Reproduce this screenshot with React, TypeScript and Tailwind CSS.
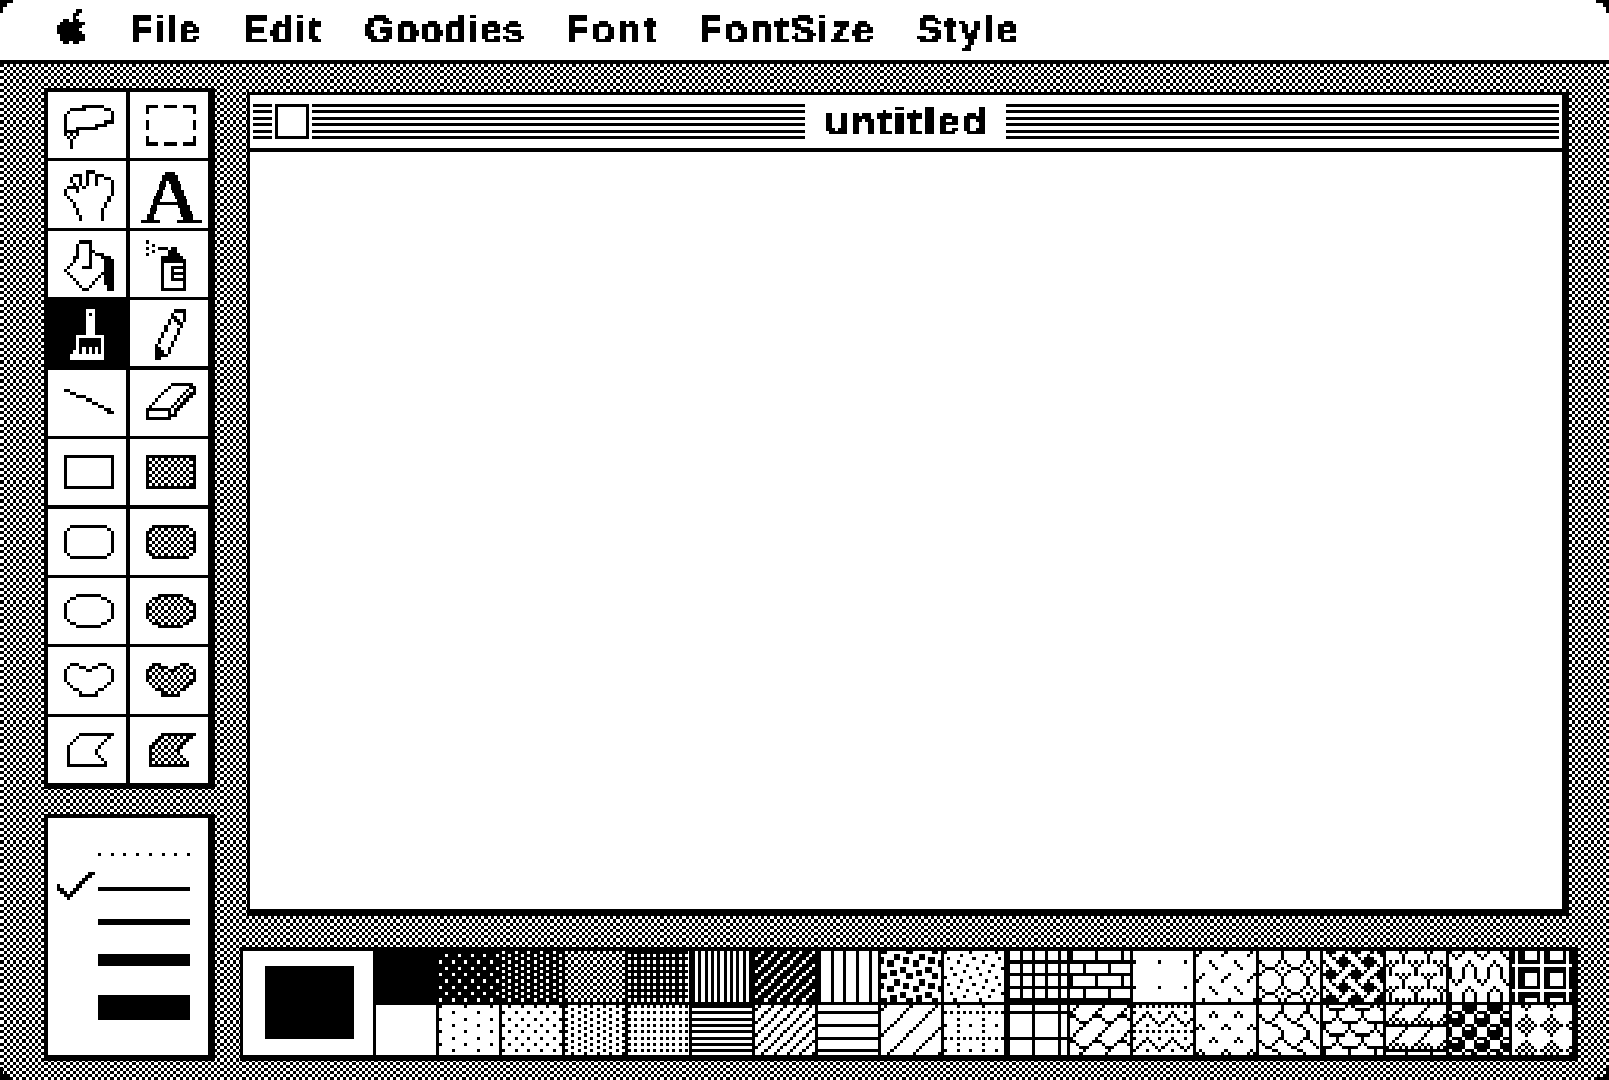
import React from "react";

// classic 8x8 paint patterns, one byte per row
const topPatterns = [
  "FFFFFFFFFFFFFFFF", "77FFDDFF77FFDDFF", "DD77DD77DD77DD77", "AA55AA55AA55AA55", "55FF55FF55FF55FF",
  "AAAAAAAAAAAAAAAA", "EEDDBB77EEDDBB77", "8888888888888888", "B130031BD8C00C8D", "8010022001084004",
  "FF888888FF888888", "FF808080FF080808", "8000000000000000", "8040200002040800", "8244394482010101",
  "F87422478F172271", "55A04040550A0404", "2050888888880502", "BF00BFBFB0B0B0B0",
];
const bottomPatterns = [
  "0000000000000000", "8000080080000800", "8800220088002200", "8822882288228822", "AA00AA00AA00AA00",
  "FF00FF00FF00FF00", "1122448811224488", "FF000000FF000000", "0102040810204080", "AA00800088008000",
  "FF80808080808080", "081C22C180010204", "881422418800AA00", "40A00000040A0000", "038448300C020101",
  "8080413E080814E3", "102054AAFF020408", "77898F8F7798F8F8", "0008142A552A1408",
];

function patternPath(hex: string, gx: number, gy: number, w: number, h: number) {
  let d = "";
  for (let y = 0; y < h; y++) {
    const row = parseInt(hex.substr(((gy + y) % 8) * 2, 2), 16);
    for (let x = 0; x < w; x++) {
      if ((row >> (7 - ((gx + x) % 8))) & 1) d += `M${x} ${y}h1v1h-1z`;
    }
  }
  return d;
}

// turns rows of # into a path; + is the grey fill when filled is on
function bitmapPath(rows: string[], dx = 0, dy = 0, filled = false) {
  let d = "";
  rows.forEach((row, y) => {
    row.split("").forEach((c, x) => {
      const on = c === "#" || (filled && c === "+" && (x + y) % 2 === 1);
      if (on) d += `M${x + dx} ${y + dy}h1v1h-1z`;
    });
  });
  return d;
}

// the desktop grey: one hard band per original screen pixel, xor'd by the blend mode
function bands(angle: string, count: number, scale: number, from: number, start: number) {
  const stops: string[] = [];
  for (let i = from; i < count; i++) {
    const a = Math.max(Math.ceil(i * scale) - start, 0);
    const b = Math.ceil((i + 1) * scale) - start;
    stops.push(`${i % 2 === 0 ? "#000" : "#fff"} ${a}px ${b}px`);
  }
  return `linear-gradient(${angle},${stops.join(",")})`;
}
const desktopGrey = `${bands("90deg", 512, 1609 / 512, 0, 0)},${bands("180deg", 342, 1080 / 342, 20, 64)}`;

const lasso = [
  "......#######...",
  "..#####......##.",
  ".#.............#",
  "#..............#",
  "#..............#",
  "#............###",
  "#.........####..",
  "#...#######.....",
  "#####...........",
  "#.#.#...........",
  ".#.#............",
  "..#.............",
  "..#.............",
  "..#.............",
];
const marquee = [
  "####..####..####",
  "#..............#",
  "#..............#",
  "................",
  "................",
  "#..............#",
  "#..............#",
  "#..............#",
  "................",
  "................",
  "#..............#",
  "#..............#",
  "####..####..####",
];
const hand = [
  ".......###......",
  "...###.#..###...",
  "..#..#.#..#..##.",
  "..#..#.#..#....#",
  "...#.#.#..#....#",
  ".####.#........#",
  "#...#..........#",
  "#..............#",
  ".#............#.",
  "..#...........#.",
  "...#.........#..",
  "...#.........#..",
  "....#.......#...",
  "....#.......#...",
  ".....#......#...",
  ".....#......#...",
];
const bucket = [
  ".....####.......",
  "....#...#.......",
  "....#...#.......",
  "....#...##......",
  "....#...#.###...",
  "...##...#...###.",
  "...#....#....###",
  "..#.....#....###",
  ".#....###....###",
  "#............###",
  ".#..........####",
  "..#........#.###",
  "...#......#..###",
  "....#....#...###",
  ".....#..#.....##",
  "......##......##",
];
const spray = [
  "#............",
  "..#..........",
  "#...###.##...",
  "..#....###...",
  "#......####..",
  ".....#######.",
  ".....########",
  ".....#......#",
  ".....#..#####",
  ".....#..#...#",
  ".....#..#####",
  ".....#..#...#",
  ".....#..#####",
  ".....#......#",
  ".....#......#",
  ".....########",
];
const brush = [
  ".....###...",
  ".....#.#...",
  ".....###...",
  ".....###...",
  ".....###...",
  ".....###...",
  ".....###...",
  ".....###...",
  "..#########",
  "..#.......#",
  "..#.......#",
  "..#.......#",
  "..#.#.#.#.#",
  ".##.#.#.#.#",
  "###########",
  "###########",
];
const pencil = [
  "......####",
  ".....#...#",
  ".....##..#",
  "....#.##.#",
  "....#..##.",
  "...#....#.",
  "...#...#..",
  "..#....#..",
  "..#...#...",
  ".#....#...",
  ".#...#....",
  "#....#....",
  "##..#.....",
  "###.#.....",
  "####......",
  "##........",
];
const line = [
  "##..............",
  "..##............",
  "....###.........",
  ".......##.......",
  ".........##.....",
  "...........##...",
  ".............##.",
  "..............##",
];
const eraser = [
  "........#######.",
  ".......#......##",
  "......#......#.#",
  ".....#......#.##",
  "....#......#.##.",
  "...#......#.##..",
  "..#......#.##...",
  ".#......#.##....",
  "########.##.....",
  "#......#.#......",
  "#......###......",
  "########........",
];
const rect = [
  "################",
  ...Array(9).fill("#++++++++++++++#"),
  "################",
];
const round = [
  "..############..",
  ".#++++++++++++#.",
  ...Array(7).fill("#++++++++++++++#"),
  ".#++++++++++++#.",
  "..############..",
];
const oval = [
  "....########....",
  "..##++++++++##..",
  ".#++++++++++++#.",
  "#++++++++++++++#",
  "#++++++++++++++#",
  "#++++++++++++++#",
  "#++++++++++++++#",
  "#++++++++++++++#",
  ".#++++++++++++#.",
  "..##++++++++##..",
  "....########....",
];
const blob = [
  "..###......###..",
  ".#+++##..##+++#.",
  "#++++++##++++++#",
  "#++++++++++++++#",
  "#++++++++++++++#",
  "#++++++++++++++#",
  ".#++++++++++++#.",
  "..#++++++++++#..",
  "...##++++++##...",
  ".....#++++#.....",
  ".....######.....",
];
const poly = [
  "....###########",
  "...#+++++++++#.",
  "..#+++++++++#..",
  ".#+++++++++#...",
  "#+++++++++#....",
  "#++++++++#.....",
  "#++++++++#.....",
  "#+++++++++#....",
  "#++++++++++#...",
  "#+++++++++++#..",
  "#############..",
];
const check = [
  "..........##",
  ".........##.",
  "........##..",
  ".......##...",
  "#.....##....",
  "##...##.....",
  ".##.##......",
  "..###.......",
  "...#........",
];
const apple = [
  "......##.",
  ".....##..",
  ".....#...",
  "..##.##..",
  ".########",
  "########.",
  "#######..",
  "########.",
  ".########",
  ".########",
  "..##.##..",
];
const corner = ["####", "##..", "#...", "#..."];

function ToolIcon({ rows, x, y, filled = false, invert = false }: { rows: string[]; x: number; y: number; filled?: boolean; invert?: boolean }) {
  return (
    <svg viewBox="0 0 25 21" preserveAspectRatio="none" shapeRendering="crispEdges" className="block w-full h-full">
      <path d={bitmapPath(rows, x, y, filled)} fill={invert ? "#fff" : "#000"} />
    </svg>
  );
}

function Tool({ children, dark = false }: { children: React.ReactNode; dark?: boolean }) {
  return <div className={`min-h-0 ${dark ? "bg-black" : "bg-white"}`}>{children}</div>;
}

function Stripes({ className }: { className: string }) {
  return (
    <div className={`h-[35px] flex flex-col justify-between ${className}`}>
      <div className="h-[3px] bg-black" />
      <div className="h-[3px] bg-black" />
      <div className="h-[3px] bg-black" />
      <div className="h-[3px] bg-black" />
      <div className="h-[3px] bg-black" />
      <div className="h-[3px] bg-black" />
    </div>
  );
}

function Swatch({ hex, col, row }: { hex: string; col: number; row: number }) {
  const gx = 120 + col * 20;
  const gy = row === 0 ? 301 : 318;
  return (
    <div className="bg-white min-h-0 overflow-hidden">
      <svg viewBox="0 0 19 16" preserveAspectRatio="none" shapeRendering="crispEdges" className="block w-full h-full">
        <path d={patternPath(hex, gx, gy, 19, 16)} fill="#000" />
      </svg>
    </div>
  );
}

function Corner({ className, flip }: { className: string; flip: string }) {
  return (
    <svg viewBox="0 0 4 4" shapeRendering="crispEdges" className={`absolute w-[13px] h-[13px] ${className} ${flip}`}>
      <path d={bitmapPath(corner)} fill="#000" />
    </svg>
  );
}

const menu = [
  { label: "File", cls: "w-[112.7px] tracking-[1.5px]" },
  { label: "Edit", cls: "w-[122px] tracking-[2px]" },
  { label: "Goodies", cls: "w-[201px] tracking-[1.2px]" },
  { label: "Font", cls: "w-[133px] tracking-[2.7px]" },
  { label: "FontSize", cls: "w-[218px] tracking-[2.3px]" },
  { label: "Style", cls: "w-[120px] tracking-[2.5px]" },
];

export default function App() {
  return (
    <div className="relative w-[1609px] h-[1080px] overflow-hidden bg-white font-['Liberation_Sans',Arial,sans-serif] text-black">
      <svg width="0" height="0" className="absolute">
        <filter id="pixelate" x="0" y="0" width="100%" height="100%" colorInterpolationFilters="sRGB">
          <feFlood x="1" y="1" width="1" height="1" />
          <feComposite width="3" height="3" />
          <feTile result="grid" />
          <feComposite in="SourceGraphic" in2="grid" operator="in" />
          <feMorphology operator="dilate" radius="1" />
          <feComponentTransfer>
            <feFuncA type="discrete" tableValues="0 1 1" />
          </feComponentTransfer>
        </filter>
      </svg>

      {/* menu bar */}
      <div className="h-[64px] border-b-[4px] border-black bg-white flex items-start pl-[57px]">
        <svg viewBox="0 0 9 11" shapeRendering="crispEdges" className="block w-[28px] h-[35px] mt-[9px] mr-[45px] shrink-0">
          <path d={bitmapPath(apple)} fill="#000" />
        </svg>
        {menu.map((m) => (
          <div key={m.label} className={`shrink-0 h-[52px] pt-[10px] text-[38px] leading-[40px] font-bold [-webkit-text-stroke:0.6px_#000] [filter:url(#pixelate)] ${m.cls}`}>
            {m.label}
          </div>
        ))}
      </div>

      {/* desktop */}
      <div
        className="h-[1016px] flex pl-[44px] pt-[24px] gap-x-[25px] bg-no-repeat [background-blend-mode:difference]"
        style={{ backgroundImage: desktopGrey }}
      >
        <div className="w-[171px] shrink-0 flex flex-col gap-y-[25px]">
          {/* tools */}
          <div className="h-[701px] border-l-[4px] border-t-[4px] border-r-[7px] border-b-[6px] border-black bg-black grid grid-cols-2 grid-rows-10 gap-x-[3.5px] gap-y-[3.2px]">
            <Tool><ToolIcon rows={lasso} x={5} y={4} /></Tool>
            <Tool><ToolIcon rows={marquee} x={5} y={4} /></Tool>
            <Tool><ToolIcon rows={hand} x={5} y={3} /></Tool>
            <Tool>
              <div className="h-full flex items-center justify-center pl-[4px] pt-[2px] text-[60px] leading-[66px] font-normal font-['Liberation_Serif',serif]">
                <span className="inline-block scale-x-[1.4] scale-y-[1.3] [-webkit-text-stroke:0.5px_#000] [filter:url(#pixelate)]">A</span>
              </div>
            </Tool>
            <Tool><ToolIcon rows={bucket} x={5} y={3} /></Tool>
            <Tool><ToolIcon rows={spray} x={5} y={3} /></Tool>
            <Tool dark><ToolIcon rows={brush} x={7} y={3} invert /></Tool>
            <Tool><ToolIcon rows={pencil} x={8} y={3} /></Tool>
            <Tool><ToolIcon rows={line} x={5} y={6} /></Tool>
            <Tool><ToolIcon rows={eraser} x={5} y={4} /></Tool>
            <Tool><ToolIcon rows={rect} x={5} y={5} /></Tool>
            <Tool><ToolIcon rows={rect} x={5} y={5} filled /></Tool>
            <Tool><ToolIcon rows={round} x={5} y={5} /></Tool>
            <Tool><ToolIcon rows={round} x={5} y={5} filled /></Tool>
            <Tool><ToolIcon rows={oval} x={5} y={5} /></Tool>
            <Tool><ToolIcon rows={oval} x={5} y={5} filled /></Tool>
            <Tool><ToolIcon rows={blob} x={5} y={5} /></Tool>
            <Tool><ToolIcon rows={blob} x={5} y={5} filled /></Tool>
            <Tool><ToolIcon rows={poly} x={6} y={5} /></Tool>
            <Tool><ToolIcon rows={poly} x={6} y={5} filled /></Tool>
          </div>

          {/* line widths */}
          <div className="relative h-[247px] border-l-[4px] border-t-[4px] border-r-[7px] border-b-[6px] border-black bg-white pl-[50px] pt-[35px]">
            <svg viewBox="0 0 12 9" shapeRendering="crispEdges" className="absolute left-[9px] top-[54px] w-[38px] h-[28px]">
              <path d={bitmapPath(check)} fill="#000" />
            </svg>
            <div className="w-[92px] flex justify-between">
              {[0, 1, 2, 3, 4, 5, 6, 7].map((i) => (
                <div key={i} className="w-[3px] h-[3px] bg-black" />
              ))}
            </div>
            <div className="w-[92px] h-[4px] mt-[31px] bg-black" />
            <div className="w-[92px] h-[6px] mt-[28px] bg-black" />
            <div className="w-[92px] h-[12px] mt-[29px] bg-black" />
            <div className="w-[92px] h-[25px] mt-[29px] bg-black" />
          </div>
        </div>

        <div className="w-[1338px] shrink-0 flex flex-col">
          {/* window */}
          <div className="ml-[6.5px] w-[1322.5px] h-[824px] mt-[4px] border-l-[3.5px] border-t-[3px] border-r-[7px] border-b-[7px] border-black bg-white">
            <div className="h-[57px] border-b-[4px] border-black flex items-start pt-[9px] px-[3px]">
              <Stripes className="w-[19px] shrink-0" />
              <div className="w-[34px] h-[35px] ml-[3px] mr-[3.5px] shrink-0 border-[3px] border-black bg-white" />
              <Stripes className="w-[492.5px] shrink-0" />
              <div className="w-[201.7px] shrink-0 pl-[20px] h-[44px] text-[39px] leading-[36px] font-bold tracking-[3px] [-webkit-text-stroke:0.6px_#000] [filter:url(#pixelate)]">untitled</div>
              <Stripes className="flex-1" />
            </div>
          </div>

          {/* patterns */}
          <div className="mt-[31px] h-[114px] border-l-[3px] border-t-[4px] border-r-[6px] border-b-[6px] border-black bg-black flex">
            <div className="w-[130px] mr-[3px] shrink-0 bg-white pl-[22px] pt-[15px]">
              <div className="w-[89px] h-[73px] bg-black" />
            </div>
            <div className="flex-1 grid grid-cols-[repeat(19,minmax(0,1fr))] grid-rows-2 gap-[3px]">
              {topPatterns.map((p, i) => (
                <Swatch key={i} hex={p} col={i} row={0} />
              ))}
              {bottomPatterns.map((p, i) => (
                <Swatch key={i} hex={p} col={i} row={1} />
              ))}
            </div>
          </div>
        </div>
      </div>

      {/* rounded screen corners */}
      <Corner className="left-0 top-0" flip="" />
      <Corner className="right-0 top-0" flip="-scale-x-100" />
      <Corner className="left-0 bottom-0" flip="-scale-y-100" />
      <Corner className="right-0 bottom-0" flip="-scale-100" />
    </div>
  );
}
